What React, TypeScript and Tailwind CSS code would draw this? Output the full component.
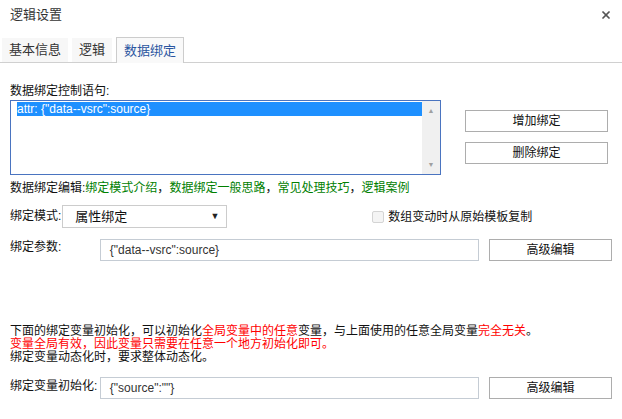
import { X } from "lucide-react";

const FONT = { fontFamily: '"Liberation Sans", "Noto Sans CJK SC", sans-serif' };

function Tab({ label, active }: { label: string; active?: boolean }) {
  if (active) {
    return (
      <div className="-mb-px flex h-[26px] items-center border border-b-0 border-[#cccccc] bg-[#f9f9f9] px-[7px] text-[13px] text-[#2a55a0]">
        {label}
      </div>
    );
  }
  return (
    <div className="flex h-[24px] items-center bg-[#f7f7f7] px-[7px] text-[13px] text-[#333]">
      {label}
    </div>
  );
}

function Btn({ label, className = "" }: { label: string; className?: string }) {
  return (
    <button
      className={`flex h-[22px] items-center justify-center border border-[#adadad] bg-white text-[12px] text-[#111] ${className}`}
    >
      {label}
    </button>
  );
}

export default function App() {
  return (
    <div style={FONT} className="h-[419px] w-[622px] overflow-hidden bg-white text-[12px] text-[#111]">
      {/* 标题栏 */}
      <div className="flex h-[30px] items-center justify-between pl-[10px] pr-[10px]">
        <span className="text-[13px] text-[#333]">逻辑设置</span>
        <X size={12} strokeWidth={3.5} className="text-[#555]" />
      </div>

      {/* 标签页 */}
      <div className="mt-[7px] flex items-end gap-[4px] border-b border-[#d0d0d0] pl-[2px]">
        <Tab label="基本信息" />
        <Tab label="逻辑" />
        <Tab label="数据绑定" active />
      </div>

      <div className="px-[10px]">
        <div className="mt-[21px] h-[15px] leading-[15px]">数据绑定控制语句:</div>

        <div className="mt-px flex">
          {/* 列表框 */}
          <div className="flex h-[75px] w-[431px] border border-[#4a74c0] bg-white">
            <div className="flex-1 pt-px pl-[6px]">
              <div className="h-[14px] bg-[#1e90ff] leading-[14px] text-white">attr: {'{"data--vsrc":source}'}</div>
            </div>
            <div className="flex w-[18px] flex-col items-center justify-between bg-[#f0f0f0] py-[6px] text-[7px] leading-none text-[#a0a0a0]">
              <span>▲</span>
              <span>▼</span>
            </div>
          </div>

          <div className="ml-[24px] flex flex-col gap-[10px] pt-[10px]">
            <Btn label="增加绑定" className="w-[143px]" />
            <Btn label="删除绑定" className="w-[143px]" />
          </div>
        </div>

        <div className="mt-[6px] h-[15px] leading-[15px]">
          数据绑定编辑:<span className="text-[#008000]">绑定模式介绍</span>，
          <span className="text-[#008000]">数据绑定一般思路</span>，
          <span className="text-[#008000]">常见处理技巧</span>，
          <span className="text-[#008000]">逻辑案例</span>
        </div>

        {/* 绑定模式 */}
        <div className="mt-[9px] flex h-[23px] items-center">
          <span className="mb-[2px]">绑定模式:</span>
          <div className="ml-px flex h-[23px] w-[165px] items-center justify-between border border-[#cccccc] bg-white pl-[12px] pr-[7px]">
            <span className="text-[13px]">属性绑定</span>
            <span className="text-[9px] text-[#222]">▼</span>
          </div>
          <label className="ml-[145px] flex items-center gap-[4px]">
            <span className="h-[12px] w-[12px] rounded-[2px] border border-[#d4d4d4] bg-[#f4f4f4]" />
            <span>数组变动时从原始模板复制</span>
          </label>
        </div>

        {/* 绑定参数 */}
        <div className="mt-[11px] flex items-start">
          <span className="mt-[-1px] w-[90px]">绑定参数:</span>
          <div className="flex h-[22px] w-[380px] items-center border border-[#c5ccd4] pl-[9px] text-[#333]">
            {'{"data--vsrc":source}'}
          </div>
          <Btn label="高级编辑" className="ml-[10px] w-[123px]" />
        </div>

        {/* 说明 */}
        <div className="mt-[64px] leading-[13px]">
          <div>
            下面的绑定变量初始化，可以初始化<span className="text-[#ff0000]">全局变量中的任意</span>
            变量，与上面使用的任意全局变量<span className="text-[#ff0000]">完全无关</span>。
          </div>
          <div className="text-[#ff0000]">变量全局有效，因此变量只需要在任意一个地方初始化即可。</div>
          <div>绑定变量动态化时，要求整体动态化。</div>
        </div>

        {/* 绑定变量初始化 */}
        <div className="mt-[13px] flex items-start">
          <span className="w-[90px]">绑定变量初始化:</span>
          <div className="flex h-[22px] w-[380px] items-center border border-[#c5ccd4] pl-[9px] text-[#333]">
            {'{"source":""}'}
          </div>
          <Btn label="高级编辑" className="ml-[10px] w-[123px]" />
        </div>
      </div>
    </div>
  );
}
